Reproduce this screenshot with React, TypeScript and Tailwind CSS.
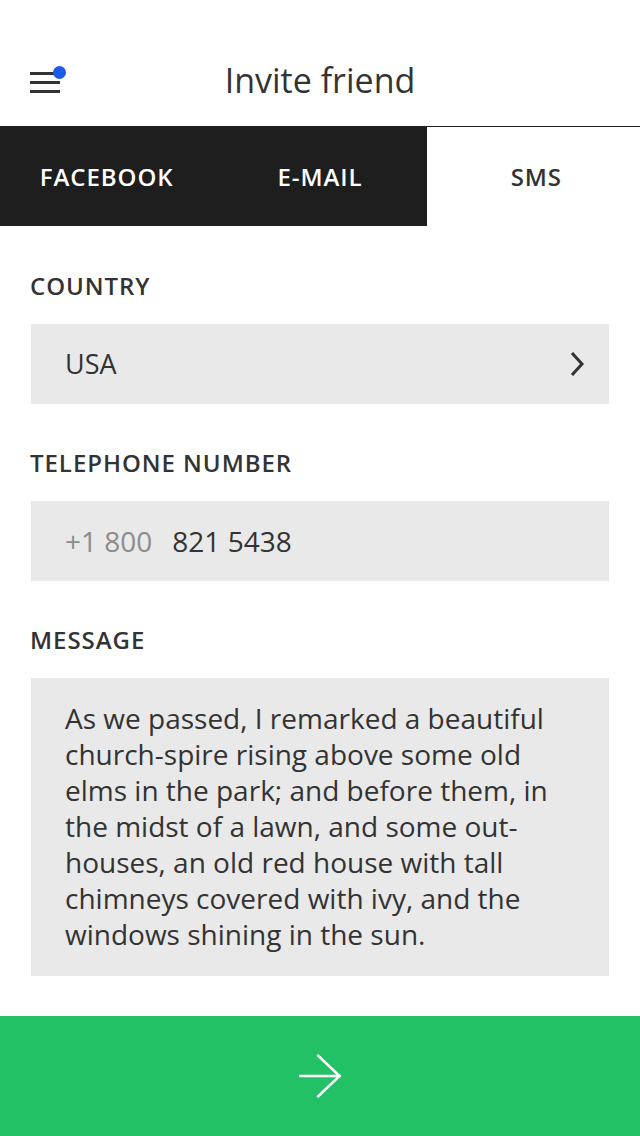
import React from "react"

const font = { fontFamily: '"Open Sans", "Noto Sans", sans-serif' }

function Field({ label, children, className = "" }: { label: string; children: React.ReactNode; className?: string }) {
  return (
    <div className="flex flex-col">
      <div className="px-[30px] text-[24px] leading-[30px] font-semibold tracking-[0.04em] text-[#333]">{label}</div>
      <div className={`mx-[31px] mt-[23px] bg-[#e9e9e9] ${className}`}>{children}</div>
    </div>
  )
}

export default function App() {
  return (
    <div className="flex h-[1136px] w-[640px] flex-col bg-white text-[#333]" style={font}>
      {/* header */}
      <header className="relative flex h-[126px] items-center justify-center pt-[34px]">
        <div className="absolute left-[30px] top-[72px] flex w-[30px] flex-col gap-[6px]">
          <span className="h-[3px] w-[24px] bg-[#333]" />
          <span className="h-[3px] w-[30px] bg-[#333]" />
          <span className="h-[3px] w-[30px] bg-[#333]" />
          <span className="absolute -right-[6px] -top-[6px] h-[13px] w-[13px] rounded-full bg-[#1a5ce6]" />
        </div>
        <h1 className="text-[34px] font-normal leading-none">Invite friend</h1>
      </header>

      {/* tabs */}
      <nav className="grid h-[100px] grid-cols-3 border-t border-[#1e1e1e] text-[24px] font-semibold tracking-[0.04em]">
        <div className="flex items-center justify-center bg-[#1e1e1e] text-white">FACEBOOK</div>
        <div className="flex items-center justify-center bg-[#1e1e1e] text-white">E-MAIL</div>
        <div className="flex items-center justify-center bg-white pl-[6px] text-[#333]">SMS</div>
      </nav>

      <main className="flex flex-1 flex-col gap-[44px] pt-[45px]">
        <Field label="COUNTRY" className="flex h-[80px] items-center justify-between pl-[34px] pr-[22px]">
          <span className="text-[27px]">USA</span>
          <svg width="20" height="28" viewBox="0 0 20 28" fill="none" stroke="#333" strokeWidth="3">
            <path d="M5 3 L15 14 L5 25" />
          </svg>
        </Field>
        <Field label="TELEPHONE NUMBER" className="flex h-[80px] items-center gap-[20px] px-[34px] text-[28px]">
          <span className="text-[#8c8c8c]">+1 800</span>
          <span>821 5438</span>
        </Field>
        <Field label="MESSAGE" className="h-[298px] pl-[34px] pr-[30px] pt-[22px]">
          <p className="text-[28px] leading-[36px]">
            As we passed, I remarked a beautiful church-spire rising above some old elms in the park; and before them, in the midst of a lawn, and some out-houses, an old red house with tall chimneys covered with ivy, and the windows shining in the sun.
          </p>
        </Field>
      </main>

      <button className="flex h-[120px] w-full items-center justify-center bg-[#22c165]">
        <svg width="44" height="44" viewBox="0 0 44 44" fill="none" stroke="white" strokeWidth="2.5" strokeLinecap="round">
          <path d="M2 22 H42" />
          <path d="M20 1.5 L41.5 22 L20 42.5" />
        </svg>
      </button>
    </div>
  )
}
